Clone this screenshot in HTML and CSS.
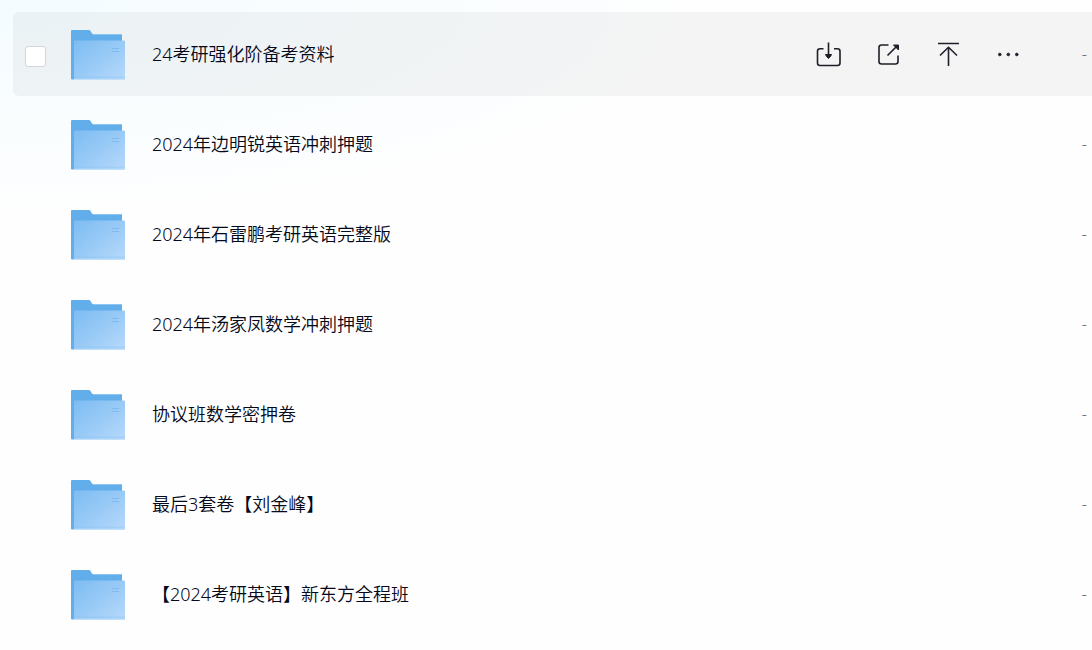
FILE: index.html
```html
<!DOCTYPE html>
<html lang="zh-CN">
<head>
  <meta charset="UTF-8" />
  <meta name="viewport" content="width=device-width, initial-scale=1.0"/>
  <title>文件列表</title>
  <link rel="stylesheet" href="styles.css">
</head>
<body>

  <!-- Shared folder icon -->
  <svg class="sprite" aria-hidden="true">
    <defs>
      <linearGradient id="front" x1="0" y1="0" x2="1" y2="1">
        <stop offset="0" stop-color="#7dbcf2"/>
        <stop offset="0.5" stop-color="#98caf6"/>
        <stop offset="1" stop-color="#b7d9fb"/>
      </linearGradient>
    </defs>
    <symbol id="folder" viewBox="0 0 54 50">
      <path fill="#62aeeb" d="M1 0h16.500q1.500 0 2.200 1.300l1.300 2.200q.4.600 1.200.6H50q1 0 1 1V49.500H1q-1 0-1-1V1q0-1 1-1z"/>
      <path fill="#8fc5f3" d="M22 4h28q1 0 1 1H22z"/>
      <rect x="3" y="10.500" width="51" height="39" rx="1" fill="url(#front)"/>
      <path fill="#8cc3f3" opacity=".4" d="M3 46.500h51v2H3z"/>
      <path fill="#c3e0fb" d="M3 48.800h51q0 1.200-1 1.200H3z"/>
      <path stroke="#7ab8ef" opacity=".8" d="M41 18.500h7M41 21.500h7"/>
    </symbol>
  </svg>

  <ul class="file-list">
    <li class="file-row active">
      <input type="checkbox" class="check" id="file1" />
      <svg class="folder"><use href="#folder"/></svg>
      <label class="name" for="file1">24考研强化阶备考资料</label>
      <div class="actions">
        <button type="button" aria-label="下载">
          <svg class="icon" viewBox="0 0 28 28">
            <path d="M9.500 8.800H6q-2.500 0-2.500 2.500V23q0 2.500 2.500 2.500h17.500q2.500 0 2.500-2.500V11.300q0-2.500-2.500-2.500h-3.500M14.500 2.500v14"/>
            <path class="fill" d="M11.500 14.500h6l-1 2-2 2-2-2z"/>
          </svg>
        </button>
        <button type="button" aria-label="分享">
          <svg class="icon" viewBox="0 0 28 28">
            <path d="M14.500 5H7.500Q5 5 5 7.500v14Q5 24 7.500 24h14q2.500 0 2.500-2.500V15.500M13.500 15.500l9-9"/>
            <path class="fill" d="M19.500 5h5v5z"/>
          </svg>
        </button>
        <button type="button" aria-label="置顶">
          <svg class="icon" viewBox="0 0 28 28">
            <path d="M4 3.500h21M14.500 26V7.500M6 15.500l8.500-8.300 8.500 8.300"/>
          </svg>
        </button>
        <button type="button" aria-label="更多">
          <svg class="icon" viewBox="0 0 28 28">
            <circle class="fill" cx="5.800" cy="14.500" r="1.300"/>
            <circle class="fill" cx="14.300" cy="14.500" r="1.300"/>
            <circle class="fill" cx="22.800" cy="14.500" r="1.300"/>
          </svg>
        </button>
      </div>
      <span class="size">-</span>
    </li>
    <li class="file-row">
      <input type="checkbox" class="check" id="file2" />
      <svg class="folder"><use href="#folder"/></svg>
      <label class="name" for="file2">2024年边明锐英语冲刺押题</label>
      <span class="size">-</span>
    </li>
    <li class="file-row">
      <input type="checkbox" class="check" id="file3" />
      <svg class="folder"><use href="#folder"/></svg>
      <label class="name" for="file3">2024年石雷鹏考研英语完整版</label>
      <span class="size">-</span>
    </li>
    <li class="file-row">
      <input type="checkbox" class="check" id="file4" />
      <svg class="folder"><use href="#folder"/></svg>
      <label class="name" for="file4">2024年汤家凤数学冲刺押题</label>
      <span class="size">-</span>
    </li>
    <li class="file-row">
      <input type="checkbox" class="check" id="file5" />
      <svg class="folder"><use href="#folder"/></svg>
      <label class="name" for="file5">协议班数学密押卷</label>
      <span class="size">-</span>
    </li>
    <li class="file-row">
      <input type="checkbox" class="check" id="file6" />
      <svg class="folder"><use href="#folder"/></svg>
      <label class="name" for="file6">最后3套卷【刘金峰】</label>
      <span class="size">-</span>
    </li>
    <li class="file-row">
      <input type="checkbox" class="check" id="file7" />
      <svg class="folder"><use href="#folder"/></svg>
      <label class="name" for="file7">【2024考研英语】新东方全程班</label>
      <span class="size">-</span>
    </li>
  </ul>

</body>
</html>
```
FILE: styles.css
```css
* {
  box-sizing: border-box;
}
body {
  margin: 0;
  min-height: 100vh;
  font-family: "Noto Sans", "Noto Sans CJK SC", sans-serif;
  font-size: 18px;
  font-weight: 350;
  color: #03081a;
  background: #fefefe radial-gradient(ellipse 720px 220px at 0 0, #f4fcff, #fefefe) no-repeat;
}
.sprite {
  position: absolute;
  width: 0;
  height: 0;
}
.file-list {
  display: flex;
  flex-direction: column;
  gap: 6px;
  margin: 0;
  padding: 12px 0 0 13px;
  list-style: none;
}
.file-row {
  display: flex;
  align-items: center;
  height: 84px;
  padding: 0 5px 0 12px;
  border-radius: 6px 0 0 6px;
}
.file-row.active {
  background-color: rgba(10, 0, 0, 0.04);
}
.check {
  appearance: none;
  width: 21px;
  height: 21px;
  margin: 4px 25px 0 0;
  border: 1px solid #d4d6d9;
  border-radius: 3px;
  background-color: #fff;
  visibility: hidden;
}
.active .check {
  visibility: visible;
}
.check:checked {
  background-color: #06a7ff;
}
.folder {
  flex: none;
  width: 54px;
  height: 50px;
  margin: 2px 27px 0 0;
}
.name {
  flex: 1;
  line-height: 28px;
}
.actions {
  display: flex;
}
.actions button {
  display: flex;
  align-items: center;
  justify-content: center;
  width: 60px;
  height: 44px;
  padding: 0;
  border: none;
  background: none;
  cursor: pointer;
}
.icon {
  width: 28px;
  height: 28px;
  fill: none;
  stroke: #1f1f29;
  stroke-width: 1.6px;
  stroke-linejoin: round;
}
.icon .fill {
  fill: #1f1f29;
  stroke-width: 1px;
}
.size {
  width: 49px;
  font-size: 16px;
  line-height: 28px;
  text-align: right;
  color: #636b7a;
}
```
